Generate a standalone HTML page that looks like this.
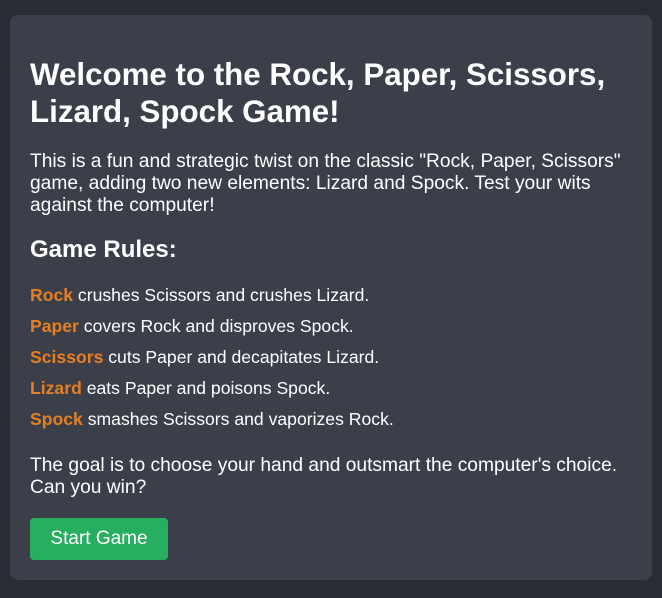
<!DOCTYPE html>
<html><head><style>
html,body{margin:0;padding:0}
body{background:#282c34;width:662px;height:598px;font-family:"Liberation Sans",Arial,sans-serif;color:#fff;overflow:hidden}
.card{position:absolute;left:10px;top:15px;width:602px;height:525px;padding:20px;background:#3a3f4a;border-radius:8px}
h1{font-size:31.3px;line-height:37px;margin:21px 0 21px;font-weight:bold}
p{font-size:19.2px;line-height:22px;margin:0}
.intro{margin-bottom:20px}
h2{font-size:24px;line-height:26px;margin:0 0 21px;font-weight:bold}
.r{font-size:17.6px;margin-bottom:9px}
.r b{color:#e67e22}
.goal{margin-top:25px}
button{margin-top:19px;background:#27ae60;color:#fff;border:none;border-radius:4px;font-family:inherit;font-size:19px;height:42px;width:138px;padding:0}
</style></head><body>
<div class="card">
<h1>Welcome to the Rock, Paper, Scissors, Lizard, Spock Game!</h1>
<p class="intro">This is a fun and strategic twist on the classic "Rock, Paper, Scissors" game, adding two new elements: Lizard and Spock. Test your wits against the computer!</p>
<h2>Game Rules:</h2>
<p class="r"><b>Rock</b> crushes Scissors and crushes Lizard.</p>
<p class="r"><b>Paper</b> covers Rock and disproves Spock.</p>
<p class="r"><b>Scissors</b> cuts Paper and decapitates Lizard.</p>
<p class="r"><b>Lizard</b> eats Paper and poisons Spock.</p>
<p class="r"><b>Spock</b> smashes Scissors and vaporizes Rock.</p>
<p class="goal">The goal is to choose your hand and outsmart the computer's choice. Can you win?</p>
<button>Start Game</button>
</div>
</body></html>
